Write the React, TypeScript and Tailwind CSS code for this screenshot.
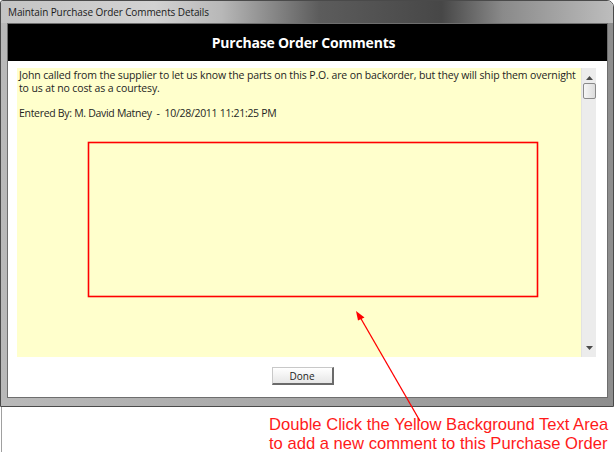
import React from 'react';

const CommentsDialog: React.FC = () => {
  return (
    <div className="relative w-[614px] h-[452px] bg-white overflow-hidden font-['Open_Sans',sans-serif]">
      {/* Window frame */}
      <div className="h-[407px] flex flex-col border border-[#4a4a4a] rounded-tr-[7px] rounded-tl-[3px] overflow-hidden">
        {/* Title bar */}
        <div className="h-[22px] shrink-0 flex items-center pl-[7px] bg-[linear-gradient(to_right,#c4c4c4_0%,#d2d2d2_25%,#b8b8b8_36%,#5c5c5c_52%,#474747_72%,#8a8a8a_82%,#bdbdbd_100%)]">
          <span className="text-[10px] text-[#1a1a1a] leading-none tracking-[-0.1px]">
            Maintain Purchase Order Comments Details
          </span>
        </div>

        {/* Frame body */}
        <div className="flex-1 flex flex-col bg-[linear-gradient(to_right,#b9b9b9,#a6a6a6_50%,#8e8e8e)] pl-[6px] pr-[5px] pb-[8px]">
          <div className="flex-1 flex flex-col bg-white border border-[#6e6e6e]">
            {/* Header */}
            <div className="h-[37px] shrink-0 bg-black flex items-center justify-center pr-[8px]">
              <span className="text-white font-bold text-[14px] tracking-[-0.2px]">Purchase Order Comments</span>
            </div>

            {/* Comment area */}
            <div className="flex pl-[9px] pr-[11px] pt-[7px]">
              <div className="flex-1 h-[289px] bg-[#ffffcc] px-[2px] pt-[1px] text-[10.5px] leading-[12.5px] text-[#1e1e1e] tracking-[-0.12px]">
                <p>
                  John called from the supplier to let us know the parts on this P.O. are on backorder, but they will ship them overnight to us at no cost as a courtesy.
                </p>
                <p className="mt-[12.5px] tracking-[-0.3px]">Entered By: M. David Matney&nbsp; -&nbsp; 10/28/2011 11:21:25 PM</p>
              </div>
              {/* Scrollbar */}
              <div className="w-[15px] h-[289px] bg-[#ececec] border-l border-[#e2e2e2] flex flex-col items-center">
                <svg width="7" height="4" viewBox="0 0 7 4" className="mt-[8px]">
                  <path d="M3.5 0 L7 4 L0 4 Z" fill="#4a4a4a" />
                </svg>
                <div className="mt-[3px] w-[13px] h-[16px] rounded-[2px] border border-[#8a8a8a] bg-[linear-gradient(to_right,#f6f6f6,#dcdcdc)]" />
                <div className="flex-1" />
                <svg width="7" height="4" viewBox="0 0 7 4" className="mb-[7px]">
                  <path d="M0 0 L7 0 L3.5 4 Z" fill="#4a4a4a" />
                </svg>
              </div>
            </div>

            {/* Done button */}
            <div className="flex justify-center pt-[10px] pr-[10px]">
              <button className="w-[62px] h-[18px] bg-[linear-gradient(to_bottom,#ffffff,#e6e6e6)] border border-[#c8c8c8] border-r-[2px] border-b-[2px] border-r-[#6a6a6a] border-b-[#6a6a6a] text-[10px] leading-none text-[#1c1c1c]">
                Done
              </button>
            </div>
          </div>
        </div>
      </div>

      {/* Left edge continuing below window */}
      <div className="absolute left-[1px] top-[407px] w-px h-[45px] bg-[#a0a0a0]" />

      {/* Annotation text */}
      <div className="absolute left-[269px] top-[415px] font-['Liberation_Sans',Arial,sans-serif] text-[16.6px] leading-[19px] text-[#ff1a1a]">
        <div>Double Click the Yellow Background Text Area</div>
        <div>to add a new comment to this Purchase Order</div>
      </div>

      {/* Annotation drawing */}
      <svg className="absolute left-0 top-0 pointer-events-none" width="614" height="452" viewBox="0 0 614 452">
        <rect x="88.5" y="142.5" width="449" height="154" fill="none" stroke="#ff0000" strokeWidth="1.6" />
        <line x1="420" y1="421" x2="360" y2="317" stroke="#ff0000" strokeWidth="1.3" />
        <path d="M356 311 L364.5 317.5 L358 320.5 Z" fill="#ff0000" />
      </svg>
    </div>
  );
};

export default CommentsDialog;
